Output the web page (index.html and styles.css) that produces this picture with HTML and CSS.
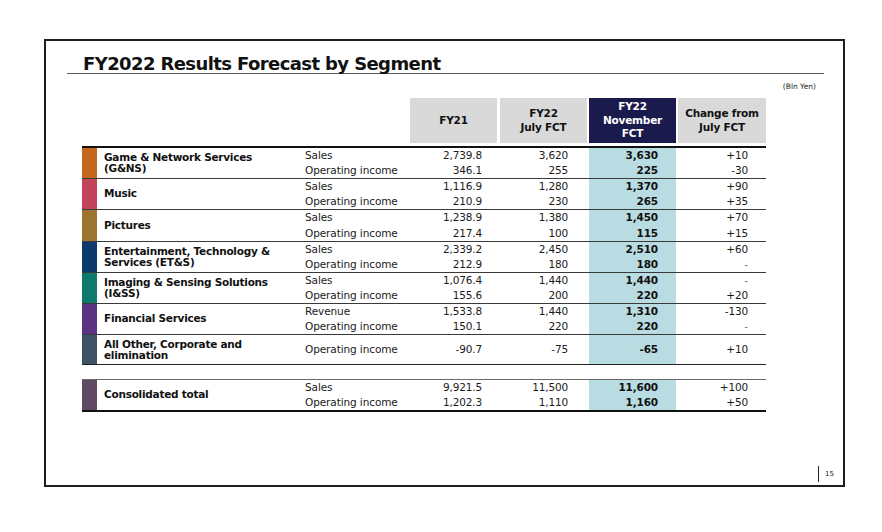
FILE: index.html
```html
<!DOCTYPE html>
<html>
<head>
<meta charset="utf-8">
<link rel="stylesheet" href="styles.css">
</head>
<body>
<div class="slide">
  <div class="title-bar"><h1 class="title">FY2022 Results Forecast by Segment</h1></div>
  <div class="unit">(Bln Yen)</div>
  <table class="fc">
    <colgroup>
      <col class="c-bar"><col class="c-name"><col class="c-label"><col class="c-fy21"><col class="c-jul"><col class="c-nov"><col class="c-chg">
    </colgroup>
    <thead>
      <tr class="hd">
        <th colspan="3"></th>
        <th><div class="hcell h-fy21">FY21</div></th>
        <th><div class="hcell h-jul">FY22<br>July FCT</div></th>
        <th><div class="hcell h-nov">FY22<br>November<br>FCT</div></th>
        <th><div class="hcell h-chg">Change from<br>July FCT</div></th>
      </tr>
    </thead>
    <tbody class="segs">
      <tr class="top first">
        <td class="bar b-gns" rowspan="2"></td>
        <td class="name" rowspan="2">Game &amp; Network Services<br>(G&amp;NS)</td>
        <td class="lbl">Sales</td><td class="num n1">2,739.8</td><td class="num n2">3,620</td><td class="num nov">3,630</td><td class="num n4">+10</td>
      </tr>
      <tr>
        <td class="lbl">Operating income</td><td class="num n1">346.1</td><td class="num n2">255</td><td class="num nov">225</td><td class="num n4">-30</td>
      </tr>
      <tr class="top">
        <td class="bar b-music" rowspan="2"></td>
        <td class="name" rowspan="2">Music</td>
        <td class="lbl">Sales</td><td class="num n1">1,116.9</td><td class="num n2">1,280</td><td class="num nov">1,370</td><td class="num n4">+90</td>
      </tr>
      <tr>
        <td class="lbl">Operating income</td><td class="num n1">210.9</td><td class="num n2">230</td><td class="num nov">265</td><td class="num n4">+35</td>
      </tr>
      <tr class="top">
        <td class="bar b-pic" rowspan="2"></td>
        <td class="name" rowspan="2">Pictures</td>
        <td class="lbl">Sales</td><td class="num n1">1,238.9</td><td class="num n2">1,380</td><td class="num nov">1,450</td><td class="num n4">+70</td>
      </tr>
      <tr class="tall">
        <td class="lbl">Operating income</td><td class="num n1">217.4</td><td class="num n2">100</td><td class="num nov">115</td><td class="num n4">+15</td>
      </tr>
      <tr class="top">
        <td class="bar b-ets" rowspan="2"></td>
        <td class="name" rowspan="2">Entertainment, Technology &amp;<br>Services (ET&amp;S)</td>
        <td class="lbl">Sales</td><td class="num n1">2,339.2</td><td class="num n2">2,450</td><td class="num nov">2,510</td><td class="num n4">+60</td>
      </tr>
      <tr>
        <td class="lbl">Operating income</td><td class="num n1">212.9</td><td class="num n2">180</td><td class="num nov">180</td><td class="num n4 dash">-</td>
      </tr>
      <tr class="top">
        <td class="bar b-iss" rowspan="2"></td>
        <td class="name" rowspan="2">Imaging &amp; Sensing Solutions<br>(I&amp;SS)</td>
        <td class="lbl">Sales</td><td class="num n1">1,076.4</td><td class="num n2">1,440</td><td class="num nov">1,440</td><td class="num n4 dash">-</td>
      </tr>
      <tr>
        <td class="lbl">Operating income</td><td class="num n1">155.6</td><td class="num n2">200</td><td class="num nov">220</td><td class="num n4">+20</td>
      </tr>
      <tr class="top">
        <td class="bar b-fs" rowspan="2"></td>
        <td class="name" rowspan="2">Financial Services</td>
        <td class="lbl">Revenue</td><td class="num n1">1,533.8</td><td class="num n2">1,440</td><td class="num nov">1,310</td><td class="num n4">-130</td>
      </tr>
      <tr>
        <td class="lbl">Operating income</td><td class="num n1">150.1</td><td class="num n2">220</td><td class="num nov">220</td><td class="num n4 dash">-</td>
      </tr>
      <tr class="top single">
        <td class="bar b-oth"></td>
        <td class="name tight">All Other, Corporate and<br>elimination</td>
        <td class="lbl">Operating income</td><td class="num n1">-90.7</td><td class="num n2">-75</td><td class="num nov">-65</td><td class="num n4">+10</td>
      </tr>
    </tbody>
    <tbody class="spacer">
      <tr><td colspan="7"></td></tr>
    </tbody>
    <tbody class="total">
      <tr class="ttop">
        <td class="bar b-tot" rowspan="2"></td>
        <td class="name" rowspan="2">Consolidated total</td>
        <td class="lbl">Sales</td><td class="num n1">9,921.5</td><td class="num n2">11,500</td><td class="num nov">11,600</td><td class="num n4">+100</td>
      </tr>
      <tr class="tbot">
        <td class="lbl">Operating income</td><td class="num n1">1,202.3</td><td class="num n2">1,110</td><td class="num nov">1,160</td><td class="num n4">+50</td>
      </tr>
    </tbody>
  </table>
  <div class="footer"><span class="pageno">15</span></div>
</div>
</body>
</html>
```

FILE: styles.css
```css
html, body {
  margin: 0;
  padding: 0;
  background: #ffffff;
}
body {
  font-family: "DejaVu Sans", "Liberation Sans", sans-serif;
  color: #111;
}
.slide {
  margin: 39px 0 0 44px;
  width: 801px;
  height: 448px;
  border: 2px solid #1e1e1e;
  box-sizing: border-box;
  display: flex;
  flex-direction: column;
}
.title-bar {
  margin: 0 19px 0 21px;
  padding-top: 14px;
  border-bottom: 1px solid #5a5a5a;
}
.title {
  margin: 0;
  padding-left: 16px;
  font-size: 18px;
  line-height: 18px;
  font-weight: bold;
  letter-spacing: -0.6px;
  color: #111;
}
.unit {
  margin-top: 8px;
  padding-right: 27px;
  text-align: right;
  font-size: 7.5px;
  line-height: 10px;
  color: #222;
}
.fc {
  margin: 6px 0 0 36px;
  border-collapse: collapse;
  table-layout: fixed;
  width: 684px;
  font-size: 10.5px;
}
.c-bar { width: 15px; }
.c-name { width: 208px; }
.c-label { width: 105px; }
.c-fy21 { width: 89px; }
.c-jul { width: 90px; }
.c-nov { width: 87px; }
.c-chg { width: 90px; }
.fc th, .fc td {
  padding: 0;
}
.hd th {
  padding-bottom: 3px;
  vertical-align: top;
}
.hcell {
  height: 45px;
  display: flex;
  align-items: center;
  justify-content: center;
  text-align: center;
  background: #d9d9d9;
  font-weight: bold;
  font-size: 10.5px;
  line-height: 13.5px;
  letter-spacing: -0.2px;
  color: #111;
}
.h-fy21 { margin-right: 2px; }
.h-jul { margin: 0 2px 0 1px; }
.h-nov { background: #1b1a4d; color: #ffffff; }
.h-chg { margin-left: 2px; }

.segs td, .total td {
  height: 15px;
  line-height: 15px;
  white-space: nowrap;
}
.segs tr.top td {
  border-top: 1px solid #3a3a3a;
}
.segs tr.first td {
  border-top: 2px solid #111;
}
.segs tr.tall td { height: 16px; }
.segs tr.single td {
  height: 29px;
  border-bottom: 1px solid #222;
}
.bar { padding: 0; }
.b-gns { background: #c4661b; }
.b-music { background: #c2445a; }
.b-pic { background: #9c7430; }
.b-ets { background: #0d3a6c; }
.b-iss { background: #0f7a6b; }
.b-fs { background: #5a3482; }
.b-oth { background: #3e5366; }
.b-tot { background: #5e4a62; }

.fc td.name {
  padding-left: 7px;
  font-weight: bold;
  line-height: 11.5px;
  letter-spacing: -0.25px;
  vertical-align: middle;
}
.fc td.name.tight { line-height: 10.5px; }
.lbl {
  letter-spacing: -0.1px;
  color: #1a1a1a;
}
.num {
  text-align: right;
  letter-spacing: -0.15px;
  color: #1a1a1a;
}
.n1 { padding-right: 17px !important; }
.n2 { padding-right: 21px !important; }
.nov {
  padding-right: 18px !important;
  background: #b8dce2;
  font-weight: bold;
  color: #111;
}
.n4 { padding-right: 18px !important; }
.dash { color: #777; }

.spacer td {
  height: 14px;
  padding: 0;
}
.total tr.ttop td {
  border-top: 1px solid #6a6a6a;
}
.total tr.tbot td,
.total td.bar,
.total td.name {
  border-bottom: 2px solid #111;
}
.footer {
  margin-top: auto;
  display: flex;
  justify-content: flex-end;
  padding: 0 9px 3px 0;
}
.pageno {
  border-left: 1px solid #222;
  padding-left: 6px;
  height: 16px;
  line-height: 16px;
  font-size: 7px;
  color: #222;
}
```
